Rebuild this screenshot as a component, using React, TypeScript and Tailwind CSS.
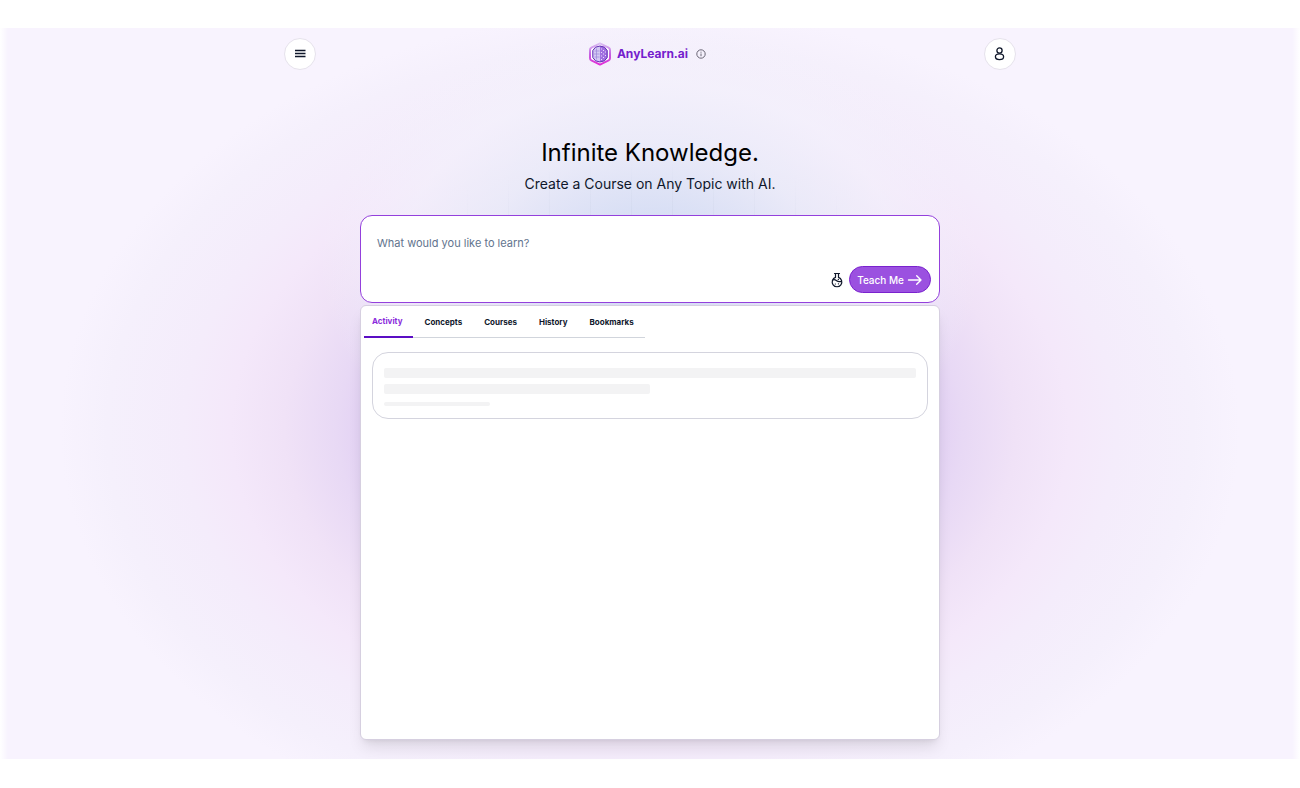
const tabs = ["Concepts", "Courses", "History", "Bookmarks"];

function Logo() {
  return (
    <svg viewBox="0 0 24 24" className="size-6" fill="none" aria-hidden="true">
      <defs>
        <linearGradient id="logo-ring" x1="12" y1="1" x2="12" y2="23" gradientUnits="userSpaceOnUse">
          <stop stopColor="#dcc3f3" />
          <stop offset="0.5" stopColor="#c463e2" />
          <stop offset="1" stopColor="#e32ad6" />
        </linearGradient>
      </defs>
      <path
        d="M12 1.400 20.600 5.600Q22 6.400 22 8V16Q22 17.600 20.600 18.400L12 22.600 3.400 18.400Q2 17.600 2 16V8Q2 6.400 3.400 5.600Z"
        fill="#fff"
        stroke="url(#logo-ring)"
        strokeWidth="2"
        strokeLinejoin="round"
      />
      <path d="M12 4 7.500 5.200 4.800 8.500V15.500L7.500 18.800 12 20Z" fill="#d3c8f3" />
      <path d="M12 4 16.500 5.200 19.200 8.500V15.500L16.500 18.800 12 20Z" fill="#a06fe0" />
      <path
        d="M12 4 7.500 5.200 4.800 8.500V15.500L7.500 18.800 12 20 16.500 18.800 19.200 15.500V8.500L16.500 5.200Z"
        stroke="#5d27b4"
        strokeWidth="1"
      />
      <path d="M6.500 9h5M6 12h5.500M6.500 15h5M8.500 6.500v11" stroke="#9c86d8" strokeWidth="0.700" />
      <path
        d="M13.500 6.500v1M15.500 8v1M17.500 9.500v1M13.500 10v1M15.500 11.500v1M17.500 13v1M13.500 13.500v1M15.500 15v1M13.500 17v1"
        stroke="#e8dcfa"
        strokeWidth="1"
      />
    </svg>
  );
}

function InfoIcon() {
  return (
    <svg viewBox="0 0 10 10" className="size-2.5" fill="none" stroke="#5b5868" strokeWidth="0.900" aria-hidden="true">
      <circle cx="5" cy="5" r="4.200" />
      <path d="M5 4.500v2.700M5 2.700v1" />
    </svg>
  );
}

function UserIcon() {
  return (
    <svg viewBox="0 0 16 16" className="size-4" fill="none" stroke="#0f172a" strokeWidth="1.300" aria-hidden="true">
      <circle cx="7.500" cy="4.500" r="2.600" />
      <ellipse cx="7.500" cy="10.800" rx="4.100" ry="2.900" />
    </svg>
  );
}

function MenuIcon() {
  return (
    <svg viewBox="0 0 16 16" className="size-4" stroke="#0f172a" strokeWidth="1.400" aria-hidden="true">
      <path d="M3 4.500h10.500M3 7.500h10.500M3 10.500h10.500" />
    </svg>
  );
}

function FlaskIcon() {
  return (
    <svg
      viewBox="0 0 16 16"
      className="size-4"
      fill="none"
      stroke="#0f172a"
      strokeWidth="1.200"
      strokeLinecap="round"
      aria-hidden="true"
    >
      <path d="M5.500 1.500h5M6.500 1.500v3.900a4.800 4.800 0 1 0 3 0V1.500" />
      <path d="M4.200 7.800c1.400-.3 2.400.2 3.400 1s2.400 1.300 4.800.6" />
      <path d="M6.300 12h.1M9.400 11.800h.1M9.300 7.400h.1" />
    </svg>
  );
}

function ArrowIcon() {
  return (
    <svg
      viewBox="0 0 16 16"
      className="size-4"
      fill="none"
      stroke="currentColor"
      strokeWidth="1.400"
      strokeLinecap="round"
      strokeLinejoin="round"
      aria-hidden="true"
    >
      <path d="M1.500 8h12.500M9.700 3.700 14 8l-4.300 4.300" />
    </svg>
  );
}

export default function App() {
  return (
    <div className="min-h-screen bg-white py-7 font-['Inter',sans-serif] text-slate-900">
      <div className="relative isolate flex flex-col items-center bg-[#f8f3fe] px-4 pt-2.5 pb-[19px]">
        <div className="absolute inset-0 -z-10 overflow-hidden bg-[radial-gradient(ellipse_330px_240px_at_50%_32%,rgb(205_219_243/0.95)_0%,rgb(215_225_245/0.85)_22%,rgb(233_237_249/0.75)_50%,rgb(243_242_252/0.6)_75%,rgb(248_243_254/0)_100%),radial-gradient(ellipse_590px_420px_at_50%_55%,#d8c0f1_0%,#dfccf3_45%,#e8d9f5_53%,#f0e2f7_62%,#f4e8fa_71%,#f4ecfb_79%,#f5f0fc_92%,#f8f3fe_100%)]">
          <div className="h-full bg-[repeating-linear-gradient(90deg,rgb(148_163_184/0.12)_0_1px,transparent_1px_41px)] bg-position-[16px_0] mask-[radial-gradient(ellipse_240px_80px_at_50%_29%,black,transparent)]" />
        </div>
        <div className="pointer-events-none absolute inset-0 -z-10 bg-[linear-gradient(90deg,white,transparent_8px,transparent_calc(100%-8px),white)]" />

        <header className="flex w-full max-w-[732px] items-center justify-between">
          <button
            type="button"
            aria-label="Menu"
            className="flex size-8 items-center justify-center rounded-full border border-[#e6e2ec] bg-white"
          >
            <MenuIcon />
          </button>
          <div className="flex items-center pr-1.5">
            <a href="#home" className="flex items-center gap-[5px] text-xs leading-5 font-bold text-[#7420cd]">
              <Logo />
              AnyLearn.ai
            </a>
            <button type="button" aria-label="About AnyLearn.ai" className="ml-2">
              <InfoIcon />
            </button>
          </div>
          <button
            type="button"
            aria-label="Account"
            className="flex size-8 items-center justify-center rounded-full border border-[#e6e2ec] bg-white"
          >
            <UserIcon />
          </button>
        </header>

        <main className="mt-[67px] flex w-full max-w-[580px] flex-col">
          <h1 className="text-center text-2xl leading-8 text-black">Infinite Knowledge.</h1>
          <p className="mt-[5px] text-center text-sm leading-5">Create a Course on Any Topic with AI.</p>

          <form
            onSubmit={(e) => e.preventDefault()}
            className="mt-[21px] flex h-[88px] flex-col justify-between rounded-xl border border-[#9440dc] bg-white pb-[9px]"
          >
            <textarea
              aria-label="What would you like to learn?"
              placeholder="What would you like to learn?"
              className="h-12 resize-none px-4 pt-[19px] text-[11px] leading-4 outline-none placeholder:text-slate-500"
            />
            <div className="flex items-center justify-end gap-1 pr-2">
              <button type="button" aria-label="Advanced options">
                <FlaskIcon />
              </button>
              <button
                type="submit"
                className="flex h-[27px] items-center gap-[3px] rounded-full border border-[#7a22ce] bg-[#9b51e0] px-[7px] text-[10px] leading-4 font-medium text-white"
              >
                Teach Me
                <ArrowIcon />
              </button>
            </div>
          </form>

          <section className="mt-0.5 min-h-[435px] rounded-md border border-[#d6cfe0] bg-white shadow-lg">
            <div role="tablist" className="ml-[3px] flex w-fit text-[8px] leading-3 font-bold">
              <button
                type="button"
                role="tab"
                aria-selected="true"
                className="h-8 border-b-2 border-[#5b0ec4] pr-[11px] pl-2 text-[#8b2bdc]"
              >
                Activity
              </button>
              {tabs.map((tab) => (
                <button
                  key={tab}
                  type="button"
                  role="tab"
                  aria-selected="false"
                  className="h-8 border-b border-gray-300 px-[11px]"
                >
                  {tab}
                </button>
              ))}
            </div>

            <div className="mx-[11px] mt-3.5 flex h-[67px] flex-col rounded-2xl border border-[#d4d4de] px-[11px] pt-[15px]">
              <div className="h-2.5 rounded-xs bg-[#f3f3f4]" />
              <div className="mt-1.5 h-2.5 w-1/2 rounded-xs bg-[#f3f3f4]" />
              <div className="mt-2 h-1 w-1/5 rounded-xs bg-[#f3f3f4]" />
            </div>
          </section>
        </main>
      </div>
    </div>
  );
}
